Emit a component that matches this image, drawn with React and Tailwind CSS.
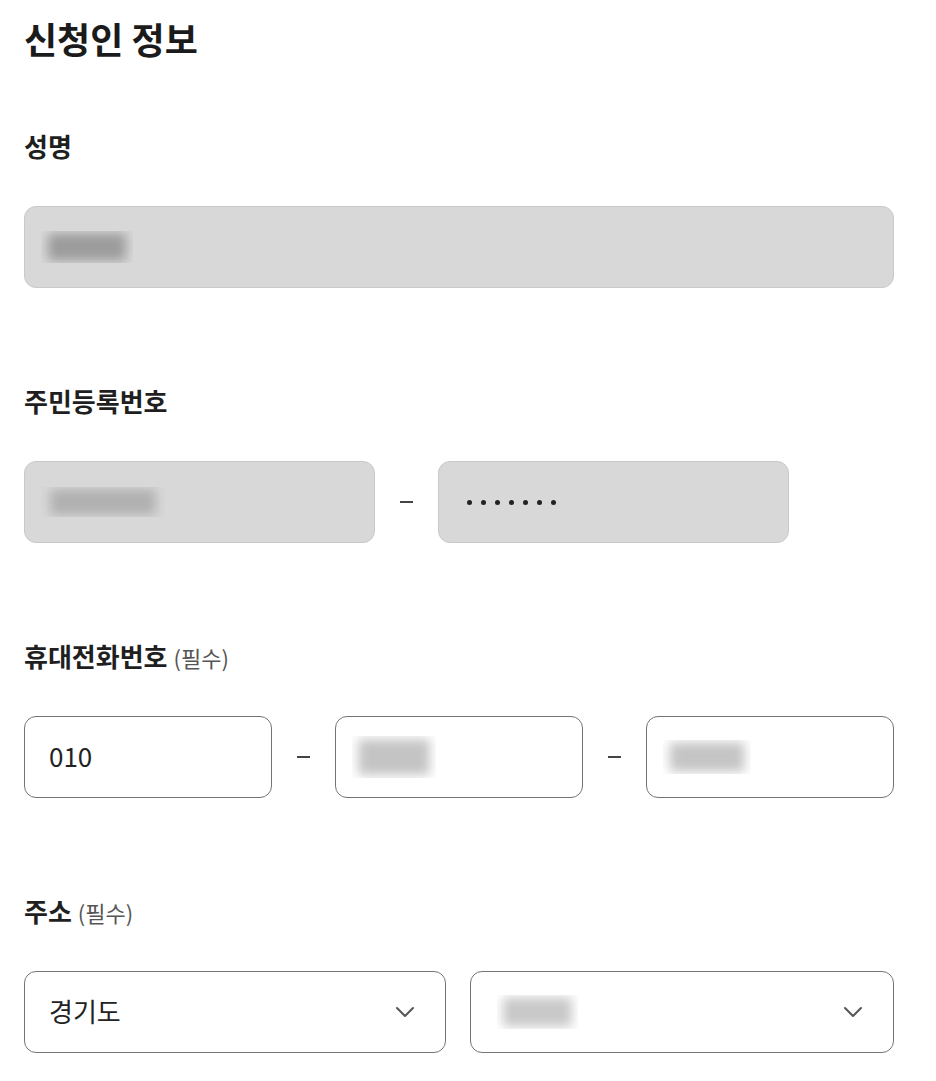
import React from 'react';

const font = { fontFamily: '"Noto Sans CJK KR", "Noto Sans", sans-serif' };

function Blur({ w, h, tone = 'bg-[#b5b5b5]' }) {
    return (
        <div className={`overflow-hidden ${w} ${h}`}>
            <div className={`w-full h-full ${tone} blur-[6px] scale-[0.85]`} />
        </div>
    );
}

function Chevron() {
    return (
        <svg width="20" height="12" viewBox="0 0 20 12" fill="none" className="shrink-0">
            <path d="M2 2 L10 10 L18 2" stroke="#555" strokeWidth="2" strokeLinecap="round" strokeLinejoin="round" />
        </svg>
    );
}

function Dash() {
    return <div className="w-[63px] flex justify-center shrink-0"><div className="w-[13px] h-[2px] bg-[#444]" /></div>;
}

function Label({ children, required }) {
    return (
        <h2 className="h-[34px] text-[26px] leading-[34px] font-bold text-[#1f1f1f]">
            {children}
            {required && <span className="ml-[6px] text-[22px] leading-none font-normal text-[#555]">(필수)</span>}
        </h2>
    );
}

export default function App() {
    return (
        <div className="bg-white min-h-screen pl-6 w-[936px]" style={font}>
            <div className="w-[870px] pt-[16px] pb-10">
                <h1 className="text-[36px] leading-[44px] font-bold text-[#1b1b1b]">신청인 정보</h1>

                <div className="mt-[69px]">
                    <Label>성명</Label>
                    <div className="mt-[43px] h-[82px] rounded-[12px] bg-[#d8d8d8] border border-[#c9c9c9] flex items-center pl-4">
                        <Blur w="w-[92px]" h="h-[32px]" tone="bg-[#9c9c9c]" />
                    </div>
                </div>

                <div className="mt-[96px]">
                    <Label>주민등록번호</Label>
                    <div className="mt-[43px] flex items-center">
                        <div className="w-[351px] h-[82px] rounded-[12px] bg-[#d8d8d8] border border-[#c9c9c9] flex items-center pl-4">
                            <Blur w="w-[124px]" h="h-[30px]" tone="bg-[#b0b0b0]" />
                        </div>
                        <Dash />
                        <div className="w-[351px] h-[82px] rounded-[12px] bg-[#d8d8d8] border border-[#c9c9c9] flex items-center pl-[28px] gap-[9px]">
                            {[0, 1, 2, 3, 4, 5, 6].map(i => (
                                <span key={i} className="w-[5px] h-[5px] rounded-full bg-[#222]" />
                            ))}
                        </div>
                    </div>
                </div>

                <div className="mt-[96px]">
                    <Label required>휴대전화번호</Label>
                    <div className="mt-[43px] flex items-center">
                        <div className="w-[248px] h-[82px] rounded-[12px] border border-[#747474] flex items-center pl-6 pb-[3px] text-[26px] text-[#222]">010</div>
                        <Dash />
                        <div className="w-[248px] h-[82px] rounded-[12px] border border-[#747474] flex items-center pl-4">
                            <Blur w="w-[84px]" h="h-[42px]" tone="bg-[#c4c4c4]" />
                        </div>
                        <Dash />
                        <div className="w-[248px] h-[82px] rounded-[12px] border border-[#747474] flex items-center pl-4">
                            <Blur w="w-[88px]" h="h-[34px]" tone="bg-[#c4c4c4]" />
                        </div>
                    </div>
                </div>

                <div className="mt-[96px]">
                    <Label required>주소</Label>
                    <div className="mt-[43px] flex gap-6">
                        <div className="flex-1 h-[82px] rounded-[12px] border border-[#747474] flex items-center justify-between pl-6 pr-[30px] text-[26px] text-[#222]">
                            <span className="pb-[3px]">경기도</span>
                            <Chevron />
                        </div>
                        <div className="flex-1 h-[82px] rounded-[12px] border border-[#747474] flex items-center justify-between pl-[26px] pr-[30px]">
                            <Blur w="w-[81px]" h="h-[34px]" tone="bg-[#c8c8c8]" />
                            <Chevron />
                        </div>
                    </div>
                </div>
            </div>
        </div>
    );
}
